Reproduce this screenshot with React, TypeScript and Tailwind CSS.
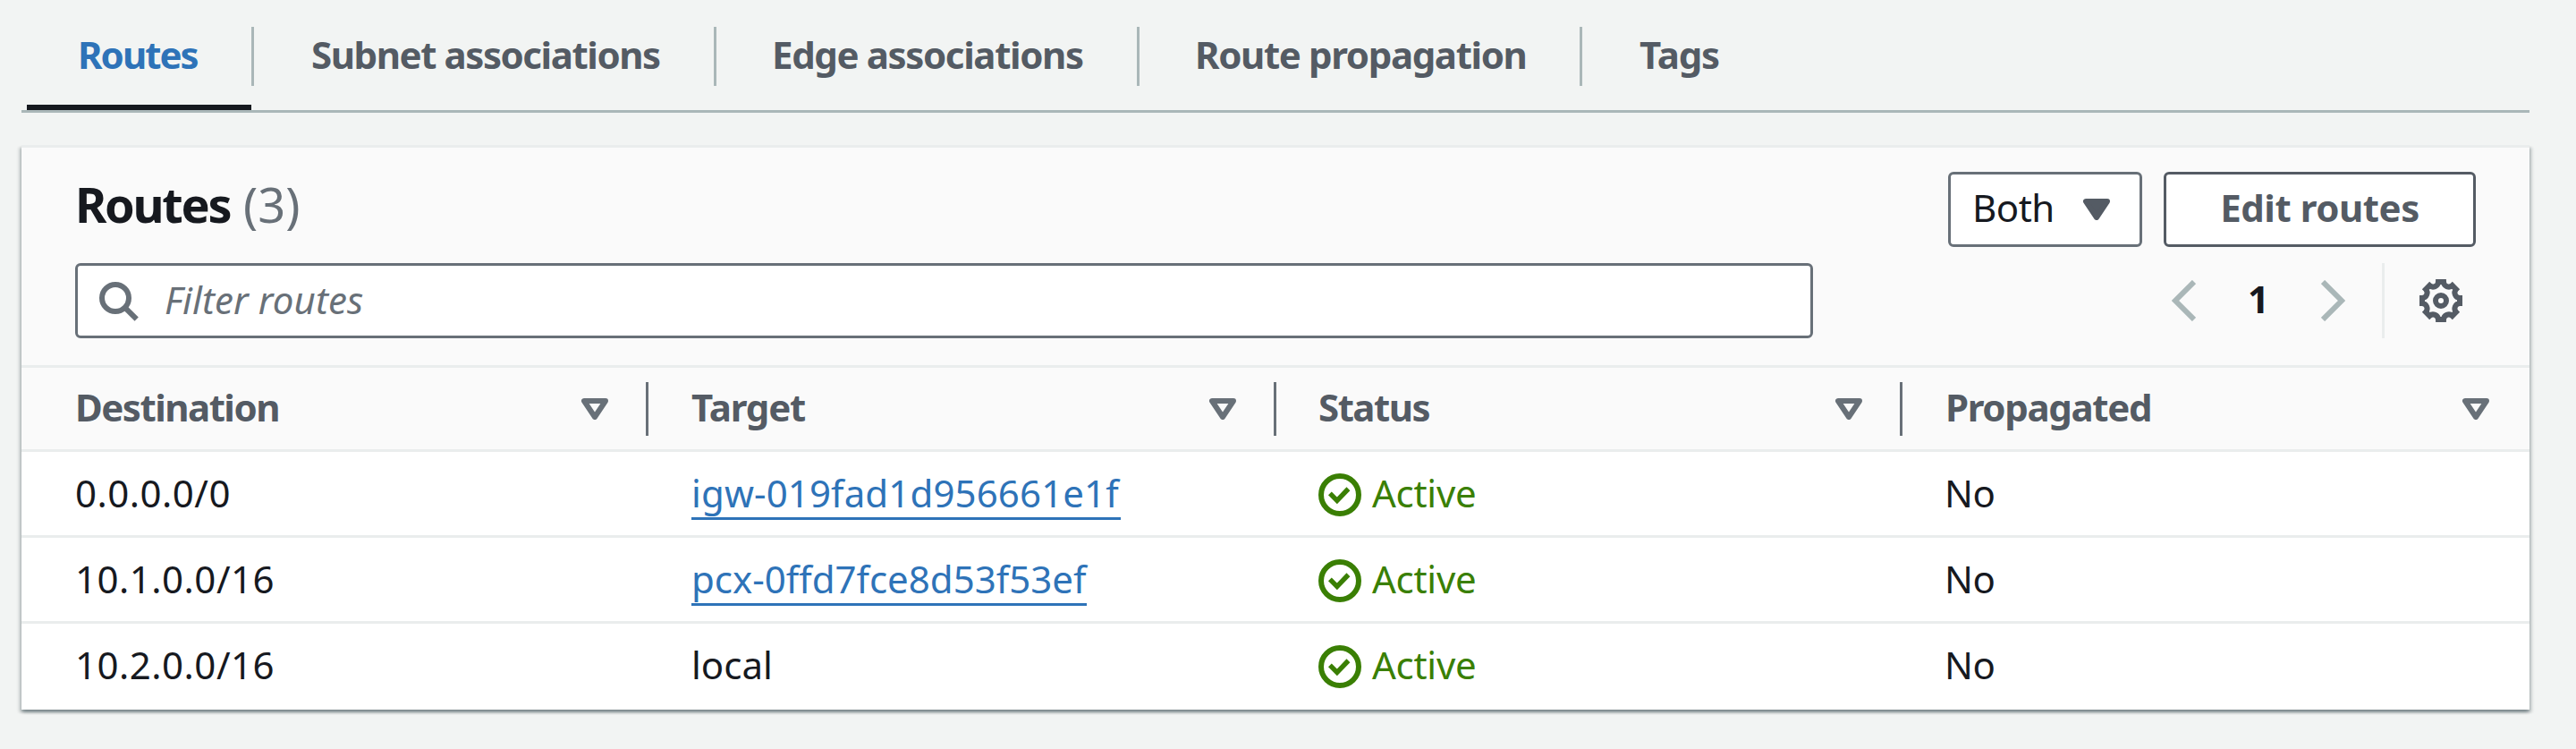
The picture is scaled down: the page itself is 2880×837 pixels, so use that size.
import React from "react";

const tabs = [
  { label: "Subnet associations", cls: "w-[517px] pl-[64px] tracking-[-1.43px]" },
  { label: "Edge associations", cls: "w-[473px] pl-[62px] tracking-[-1.37px]" },
  { label: "Route propagation", cls: "w-[495px] pl-[62px] tracking-[-1.37px]" },
];

const columns = [
  { label: "Destination", cls: "pl-[60px] tracking-[-1.5px]" },
  { label: "Target", cls: "pl-[48px] tracking-[-1.2px]" },
  { label: "Status", cls: "pl-[47px] tracking-[-1.5px]" },
  { label: "Propagated", cls: "pl-[48px] tracking-[-1.33px]" },
];

const routes = [
  { destination: "0.0.0.0/0", destCls: "tracking-[0.5px]", target: "igw-019fad1d956661e1f", link: true, targetCls: "w-[480px] tracking-[0.12px]" },
  { destination: "10.1.0.0/16", destCls: "tracking-[0.5px]", target: "pcx-0ffd7fce8d53f53ef", link: true, targetCls: "w-[442px]" },
  { destination: "10.2.0.0/16", destCls: "tracking-[0.5px]", target: "local", link: false, targetCls: "tracking-[0px]" },
];

function Caret({ filled = false }: { filled?: boolean }) {
  return (
    <svg viewBox="0 0 10 8" className="h-[24px] w-[30px] shrink-0">
      <path d="M1 1H9L5 7Z" fill={filled ? "currentColor" : "none"} stroke="currentColor" strokeWidth="2" strokeLinejoin="round" />
    </svg>
  );
}

function SearchIcon() {
  return (
    <svg viewBox="0 0 16 16" className="size-12 shrink-0" fill="none" stroke="currentColor" strokeWidth="2">
      <circle cx="7" cy="7" r="5" />
      <path d="M10.6 10.6L14.9 14.9" />
    </svg>
  );
}

function GearIcon() {
  return (
    <svg viewBox="0 0 16 16" className="size-12 shrink-0" fill="none" stroke="currentColor" strokeWidth="2">
      <circle cx="8" cy="8" r="2" />
      <path d="M7 1H9A1.93 1.93 0 0 0 12.24 2.34L13.66 3.76A1.93 1.93 0 0 0 15 7V9A1.93 1.93 0 0 0 13.66 12.24L12.24 13.66A1.93 1.93 0 0 0 9 15H7A1.93 1.93 0 0 0 3.76 13.66L2.34 12.24A1.93 1.93 0 0 0 1 9V7A1.93 1.93 0 0 0 2.34 3.76L3.76 2.34A1.93 1.93 0 0 0 7 1Z" />
    </svg>
  );
}

function CheckIcon() {
  return (
    <svg viewBox="0 0 16 16" className="size-12 shrink-0" fill="none" stroke="currentColor" strokeWidth="2">
      <circle cx="8" cy="8" r="7" />
      <path d="M4.3 7.45L6.95 10.1L11.15 5.75" strokeWidth="1.8" />
    </svg>
  );
}

export default function App() {
  return (
    <div className="h-[837px] w-[2880px] overflow-hidden bg-[#f2f4f3] pl-6 font-['Noto_Sans',sans-serif] text-[42px] leading-[60px] text-[#16191f]">
      <nav className="flex h-[126px] w-[2804px] border-b-[3px] border-[#aab7b8] pl-[6px] pt-[30px] font-[675] text-[#545b64]">
        <div className="h-[93px] w-[251px] pl-[57px] pt-px tracking-[-1.96px] text-[#2e73b8] shadow-[inset_0_-6px_0_#16191f]">
          Routes
        </div>
        <div className="h-[66px] w-[3px] bg-[#aab7b8]" />
        {tabs.map((t) => (
          <div key={t.label} className={`h-[66px] border-r-[3px] border-[#aab7b8] pt-px whitespace-nowrap ${t.cls}`}>
            {t.label}
          </div>
        ))}
        <div className="h-[66px] pl-[64px] pt-px tracking-[-1.2px]">Tags</div>
      </nav>

      <section className="mt-9 h-[631px] w-[2804px] border-t-[3px] border-[#eaeded] bg-white shadow-[0_3px_3px_0_rgba(0,28,36,0.3),3px_3px_3px_0_rgba(0,28,36,0.15),-3px_3px_3px_0_rgba(0,28,36,0.15)]">
        <header className="h-[246px] border-b-[3px] border-[#eaeded] bg-[#fafafa] px-[60px] pt-[27px]">
          <div className="flex justify-between">
            <h2 className="text-[54px] leading-[72px] font-[675] tracking-[-2.3px]">
              Routes <span className="ml-[3px] font-normal tracking-[0.1px] text-[#687078]">(3)</span>
            </h2>
            <div className="flex gap-6">
              <button className="flex h-[84px] w-[217px] items-center justify-between rounded-[6px] border-[3px] border-[#687078] bg-white pl-[24px] pr-[33px]">
                <span className="pb-1 tracking-[-0.5px]">Both</span>
                <span className="text-[#545b64]">
                  <Caret filled />
                </span>
              </button>
              <button className="flex h-[84px] w-[349px] items-center justify-center rounded-[6px] border-[3px] border-[#545b64] bg-white pb-1 font-[675] tracking-[-0.46px] text-[#545b64]">
                Edit routes
              </button>
            </div>
          </div>
          <div className="mt-[18px] flex h-[84px] justify-between">
            <div className="flex w-[1943px] items-center rounded-[6px] border-[3px] border-[#687078] bg-white pl-[21px] text-[#687078]">
              <SearchIcon />
              <span className="pb-[3px] pl-[28px] italic tracking-[0.08px]">Filter routes</span>
            </div>
            <div className="flex items-center pr-[15px]">
              <svg viewBox="0 0 27 46" className="h-[46px] w-[27px] text-[#aab7b8]" fill="none" stroke="currentColor" strokeWidth="6">
                <path d="M25 2L4 23L25 44" />
              </svg>
              <span className="w-[140px] pb-[5px] pl-[58px] font-[675]">1</span>
              <svg viewBox="0 0 27 46" className="h-[46px] w-[27px] text-[#aab7b8]" fill="none" stroke="currentColor" strokeWidth="6">
                <path d="M2 2L23 23L2 44" />
              </svg>
              <div className="ml-[41px] mr-[39px] h-[84px] w-[3px] bg-[#eaeded]" />
              <span className="text-[#545b64]">
                <GearIcon />
              </span>
            </div>
          </div>
        </header>

        <div className="grid h-[94px] grid-cols-[701px_702px_700px_701px] border-b-[3px] border-[#eaeded] bg-[#fafafa] font-[675] text-[#545b64]">
          {columns.map((c, i) => (
            <div key={c.label} className="flex pt-[14px]">
              <span className={`grow ${c.cls}`}>{c.label}</span>
              <span className={`pt-5 text-[#687078] ${i === 3 ? "pr-[45px]" : "pr-[42px]"}`}>
                <Caret />
              </span>
              {i < 3 && <span className="mt-[2px] h-[60px] w-[3px] bg-[#687078]" />}
            </div>
          ))}
        </div>

        {routes.map((r, i) => (
          <div
            key={r.destination}
            className={`grid h-24 grid-cols-[750px_700px_700px_654px] pt-4 ${i < 2 ? "border-b-[3px] border-[#eaeded]" : ""}`}
          >
            <div className={`pl-[60px] ${r.destCls}`}>{r.destination}</div>
            <div className="flex">
              {r.link ? (
                <a className={`-ml-px h-[60px] border-b-[3px] border-[#2e73b8] whitespace-nowrap text-[#2e73b8] ${r.targetCls}`}>{r.target}</a>
              ) : (
                <span className={`-ml-px ${r.targetCls}`}>{r.target}</span>
              )}
            </div>
            <div className="flex gap-3 text-[#3a7f04]">
              <span className="pt-2">
                <CheckIcon />
              </span>
              <span className="tracking-[-0.27px]">Active</span>
            </div>
            <div className="tracking-[-0.5px]">No</div>
          </div>
        ))}
      </section>
    </div>
  );
}
